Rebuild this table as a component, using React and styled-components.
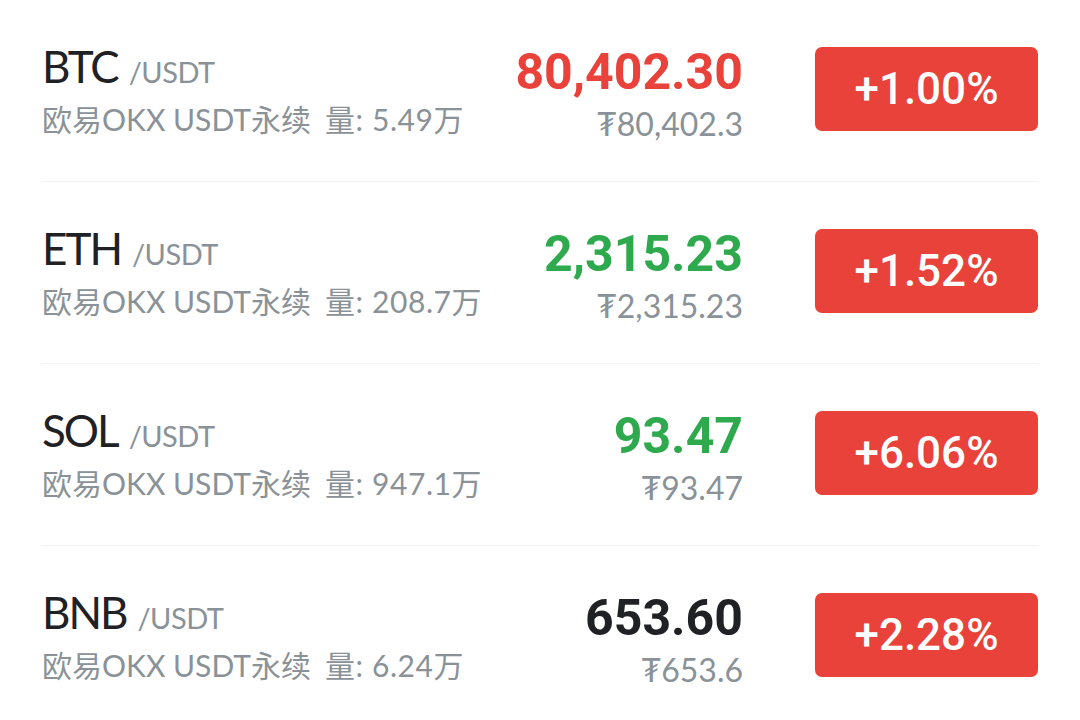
import React from "react";
import styled, { createGlobalStyle } from "styled-components";

const GlobalStyle = createGlobalStyle`
	html, body {
		margin: 0;
		padding: 0;
		background: #ffffff;
	}
	body {
		font-family: "Lato", "Noto Sans CJK SC", sans-serif;
		-webkit-font-smoothing: antialiased;
	}
`;

const RED = "#e8423a";
const GREEN = "#2fa94e";
const DARK = "#1f2124";
const GRAY = "#8a9298";

const coins = [
	{ base: "BTC", vol: "5.49万", price: "80,402.30", trend: "up", cny: "80,402.3", change: "+1.00%" },
	{ base: "ETH", vol: "208.7万", price: "2,315.23", trend: "down", cny: "2,315.23", change: "+1.52%" },
	{ base: "SOL", vol: "947.1万", price: "93.47", trend: "down", cny: "93.47", change: "+6.06%" },
	{ base: "BNB", vol: "6.24万", price: "653.60", trend: "flat", cny: "653.6", change: "+2.28%" },
];

const priceColor = trend => {
	if (trend === "up") return RED;
	if (trend === "down") return GREEN;
	return DARK;
};

const App = () => {
	return (
		<>
			<GlobalStyle />
			<List>
				{coins.map(c => (
					<Row key={c.base}>
						<Info>
							<Pair>
								<Base>{c.base}</Base>
								<Quote>/USDT</Quote>
							</Pair>
							<Market>
								欧易OKX USDT永续<Volume>量: {c.vol}</Volume>
							</Market>
						</Info>
						<PriceCol>
							<Price color={priceColor(c.trend)}>{c.price}</Price>
							<Cny>₮{c.cny}</Cny>
						</PriceCol>
						<Badge>{c.change}</Badge>
					</Row>
				))}
			</List>
		</>
	);
};
export default App;

const List = styled.div`
	width: 1080px;
	height: 720px;
	overflow: hidden;
	padding: 0 42px;
	box-sizing: border-box;
	background: #fff;
`;

const Row = styled.div`
	display: flex;
	align-items: center;
	height: 181px;
	border-bottom: 1px solid #f1f2f3;
`;

const Info = styled.div`
	flex: 1;
	display: flex;
	flex-direction: column;
	padding-bottom: 2px;
`;

const Pair = styled.div`
	display: flex;
	align-items: baseline;
	line-height: 52px;
`;

const Base = styled.span`
	font-size: 44px;
	color: ${DARK};
	letter-spacing: -2px;
`;

const Quote = styled.span`
	font-size: 29px;
	color: ${GRAY};
	margin-left: 11px;
	letter-spacing: -0.5px;
`;

const Market = styled.div`
	font-size: 30px;
	line-height: 40px;
	color: ${GRAY};
	margin-top: 1px;
	white-space: nowrap;
`;

const Volume = styled.span`
	margin-left: 14px;
	letter-spacing: 0.6px;
`;

const PriceCol = styled.div`
	display: flex;
	flex-direction: column;
	align-items: flex-end;
	padding-top: 7px;
`;

const Price = styled.div`
	font-family: "Roboto", sans-serif;
	font-weight: 700;
	font-size: 50px;
	line-height: 54px;
	color: ${props => props.color};
`;

const Cny = styled.div`
	font-size: 32px;
	line-height: 40px;
	color: ${GRAY};
	margin-top: 5px;
`;

const Badge = styled.div`
	width: 223px;
	height: 84px;
	margin: 0 0 3px 72px;
	border-radius: 7px;
	background: ${RED};
	color: #fff;
	display: flex;
	align-items: center;
	justify-content: center;
	font-family: "Roboto", sans-serif;
	font-weight: 500;
	font-size: 44px;
`;
